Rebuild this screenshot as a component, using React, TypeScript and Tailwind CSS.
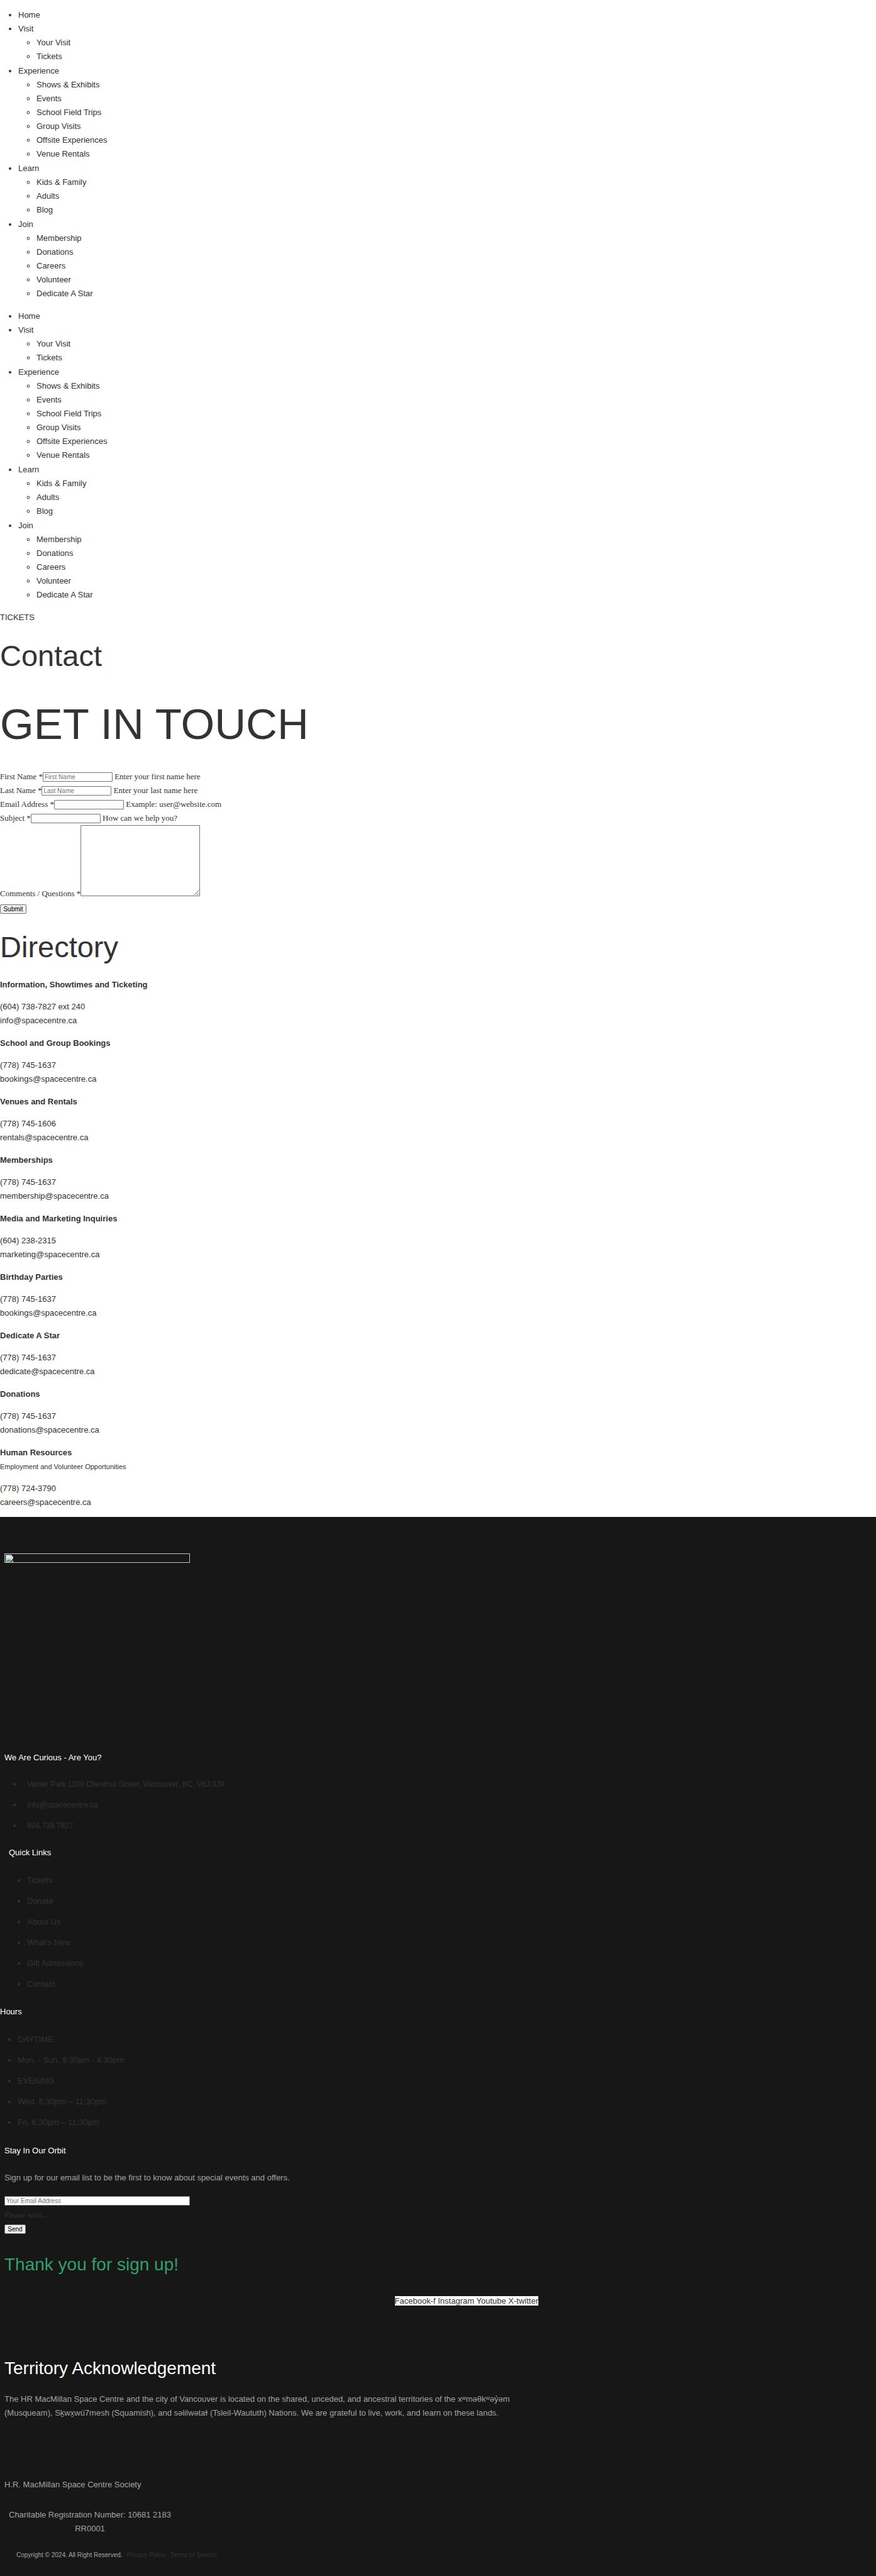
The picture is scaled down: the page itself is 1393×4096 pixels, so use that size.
import type { ReactNode } from "react";

type MenuEntry = { label: string; children?: string[] };

const menu: MenuEntry[] = [
  { label: "Home" },
  { label: "Visit", children: ["Your Visit", "Tickets"] },
  {
    label: "Experience",
    children: [
      "Shows & Exhibits",
      "Events",
      "School Field Trips",
      "Group Visits",
      "Offsite Experiences",
      "Venue Rentals",
    ],
  },
  { label: "Learn", children: ["Kids & Family", "Adults", "Blog"] },
  {
    label: "Join",
    children: ["Membership", "Donations", "Careers", "Volunteer", "Dedicate A Star"],
  },
];

const directory = [
  { title: "Information, Showtimes and Ticketing", phone: "(604) 738-7827 ext 240", email: "info@spacecentre.ca" },
  { title: "School and Group Bookings", phone: "(778) 745-1637", email: "bookings@spacecentre.ca" },
  { title: "Venues and Rentals", phone: "(778) 745-1606", email: "rentals@spacecentre.ca" },
  { title: "Memberships", phone: "(778) 745-1637", email: "membership@spacecentre.ca" },
  { title: "Media and Marketing Inquiries", phone: "(604) 238-2315", email: "marketing@spacecentre.ca" },
  { title: "Birthday Parties", phone: "(778) 745-1637", email: "bookings@spacecentre.ca" },
  { title: "Dedicate A Star", phone: "(778) 745-1637", email: "dedicate@spacecentre.ca" },
  { title: "Donations", phone: "(778) 745-1637", email: "donations@spacecentre.ca" },
  {
    title: "Human Resources",
    note: "Employment and Volunteer Opportunities",
    phone: "(778) 724-3790",
    email: "careers@spacecentre.ca",
  },
];

const quickLinks = ["Tickets", "Donate", "About Us", "What's New", "Gift Admissions", "Contact"];

const hours = [
  "DAYTIME",
  "Mon. - Sun. 9:30am - 4:30pm",
  "EVENING",
  "Wed. 6:30pm – 11:30pm",
  "Fri. 6:30pm – 11:30pm",
];

const inputClass =
  "h-[15px] rounded-[1px] border border-[#767676] bg-white px-[2px] text-[10px] leading-[12px] text-black placeholder:text-[#757575] placeholder:opacity-100 font-['Liberation_Sans',sans-serif]";

const buttonClass =
  "block h-[15px] rounded-[2px] border border-[#767676] bg-[#efefef] text-center text-[10px] leading-[12px] text-black font-['Liberation_Sans',sans-serif]";

function Menu({ label }: { label: string }) {
  return (
    <nav aria-label={label} className="mt-[13px]">
      <ul className="list-disc pl-[29px]">
        {menu.map((entry) => (
          <li key={entry.label}>
            <a href="#">{entry.label}</a>
            {entry.children && (
              <ul className="list-[circle] pb-px pl-[29px]">
                {entry.children.map((child) => (
                  <li key={child}>
                    <a href="#">{child}</a>
                  </li>
                ))}
              </ul>
            )}
          </li>
        ))}
      </ul>
    </nav>
  );
}

function Field({ id, label, placeholder, hint }: { id: string; label: string; placeholder?: string; hint: string }) {
  return (
    <div className="h-[22px]">
      <label htmlFor={id}>{label} *</label>
      <input id={id} type="text" placeholder={placeholder} className={`${inputClass} w-[111px]`} /> <span>{hint}</span>
    </div>
  );
}

function FooterTitle({ children }: { children: ReactNode }) {
  return <h3 className="text-white">{children}</h3>;
}

function BrokenImage() {
  return (
    <svg viewBox="0 0 16 16" className="h-3 w-3" aria-hidden="true">
      <path d="M0 0h11l5 5v3l-7 8H0z" fill="#c4d7f5" />
      <path d="M2 5.500a1.500 1.500 0 0 1 1.500-1.600 2 2 0 0 1 3.600 0A1.300 1.300 0 0 1 8 6H2z" fill="#fff" />
      <path d="M1 15c1-3.500 3.500-5 6-5 2 0 3 .8 4 2l-3 3z" fill="#52ad36" />
      <path d="M16 11v5h-5z" fill="#8fc08a" />
      <path d="M11 0v5h5z" fill="#f4f4f4" />
      <path d="M.5 15.500V.5H11l4.500 4.500M.5 15.500H8" fill="none" stroke="#a3a3a3" />
    </svg>
  );
}

export default function App() {
  return (
    <div className="flex min-h-screen flex-col bg-white text-[13px] leading-[22px] text-[#333] font-['Liberation_Sans',Arial,sans-serif]">
      <header className="flow-root">
        <Menu label="Main" />
        <Menu label="Mobile" />
        <p className="mt-[13px]">
          <a href="#">TICKETS</a>
        </p>
      </header>

      <main>
        <h1 className="mt-6 text-[47px] leading-[52px]">Contact</h1>
        <h2 className="mt-11 text-[69px] leading-[77px]">GET IN TOUCH</h2>

        <form className="mt-[34px] font-['Liberation_Serif',serif]" onSubmit={(e) => e.preventDefault()}>
          <Field id="first" label="First Name" placeholder="First Name" hint="Enter your first name here" />
          <Field id="last" label="Last Name" placeholder="Last Name" hint="Enter your last name here" />
          <Field id="email" label="Email Address" hint="Example: user@website.com" />
          <Field id="subject" label="Subject" hint="How can we help you?" />
          <div>
            <label htmlFor="comments">Comments / Questions *</label>
            <textarea
              id="comments"
              className="inline-block h-[113px] w-[190px] resize rounded-[1px] border border-[#767676] bg-white align-baseline"
            />
          </div>
          <button type="submit" className={`${buttonClass} mt-[6px] w-[42px]`}>
            Submit
          </button>
        </form>

        <h2 className="mt-[27px] text-[47px] leading-[52px]">Directory</h2>
        <div className="mt-[23px] flex flex-col gap-[14px] pb-3">
          {directory.map((d) => (
            <section key={d.title}>
              <h3 className="font-bold">{d.title}</h3>
              {d.note && <p className="text-[11px]">{d.note}</p>}
              <p className="mt-[13px]">{d.phone}</p>
              <p>
                <a href={`mailto:${d.email}`}>{d.email}</a>
              </p>
            </section>
          ))}
        </div>
      </main>

      <footer className="flex-1 bg-[#171717] pt-[58px] pb-5">
        <div
          role="img"
          aria-label="Space Centre logo"
          className="ml-[7px] h-[15px] w-[295px] border border-[#c0c0c0] p-px"
        >
          <BrokenImage />
        </div>

        <section className="mt-[299px] ml-[7px]">
          <FooterTitle>We Are Curious - Are You?</FooterTitle>
          <ul className="mt-5 flex list-disc flex-col gap-[11px] pl-[29px]">
            <li>
              <span className="pl-[7px] text-xs">Vanier Park 1100 Chestnut Street, Vancouver, BC, V6J 3J9</span>
            </li>
            <li>
              <a href="mailto:info@spacecentre.ca" className="pl-[7px] text-xs">
                info@spacecentre.ca
              </a>
            </li>
            <li>
              <a href="tel:6047387827" className="pl-[7px] text-xs">
                604.738.7827
              </a>
            </li>
          </ul>
        </section>

        <section className="mt-[21px] ml-[14px]">
          <FooterTitle>Quick Links</FooterTitle>
          <ul className="mt-[22px] flex list-disc flex-col gap-[11px] pl-[29px]">
            {quickLinks.map((link) => (
              <li key={link}>
                <a href="#">{link}</a>
              </li>
            ))}
          </ul>
        </section>

        <section className="mt-[22px]">
          <FooterTitle>Hours</FooterTitle>
          <ul className="mt-[22px] flex list-disc flex-col gap-[11px] pl-7">
            {hours.map((line) => (
              <li key={line}>{line}</li>
            ))}
          </ul>
        </section>

        <section className="mt-[23px] ml-[7px]">
          <FooterTitle>Stay In Our Orbit</FooterTitle>
          <p className="mt-[21px] text-[#a3a3a3]">
            Sign up for our email list to be the first to know about special events and offers.
          </p>
          <form className="mt-[18px]" onSubmit={(e) => e.preventDefault()}>
            <input
              type="email"
              aria-label="Your Email Address"
              placeholder="Your Email Address"
              className={`${inputClass} block w-[295px]`}
            />
            <p className="mt-1 font-['Liberation_Serif',serif]">Please wait...</p>
            <button type="submit" className={`${buttonClass} mt-1 w-[34px]`}>
              Send
            </button>
          </form>
          <h2 className="mt-8 text-[28px] leading-[34px] text-[#339f6b]">Thank you for sign up!</h2>
        </section>

        <p className="mt-[30px] max-w-[856px] text-right">
          <span className="bg-white">
            <a href="#">Facebook-f</a> <a href="#">Instagram</a> <a href="#">Youtube</a> <a href="#">X-twitter</a>
          </span>
        </p>

        <section className="mt-[79px] ml-[7px] max-w-[820px]">
          <h2 className="text-[28px] leading-[34px] text-white">Territory Acknowledgement</h2>
          <p className="mt-[21px] text-[#a3a3a3]">
            The HR MacMillan Space Centre and the city of Vancouver is located on the shared, unceded, and ancestral
            territories of the xʷməθkʷəy̓əm (Musqueam), Sḵwx̱wú7mesh (Squamish), and səlilwətaɬ (Tsleil-Waututh) Nations.
            We are grateful to live, work, and learn on these lands.
          </p>
        </section>

        <div className="mt-[92px] ml-[7px] text-[#a3a3a3]">
          <p>H.R. MacMillan Space Centre Society</p>
          <p className="mt-[26px] max-w-[272px] text-center">Charitable Registration Number: 10681 2183 RR0001</p>
          <p className="mt-5 flex gap-[7px] pl-[19px] text-[10px]">
            <span>Copyright © 2024. All Right Reserved.</span>
            <a href="#" className="text-[#333]">
              Privacy Policy
            </a>
            <a href="#" className="text-[#333]">
              Terms of Service
            </a>
          </p>
        </div>
      </footer>
    </div>
  );
}
